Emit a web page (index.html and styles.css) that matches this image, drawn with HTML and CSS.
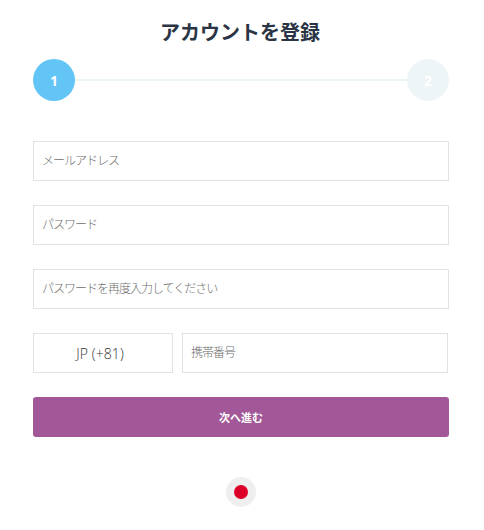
FILE: index.html
```html
<!DOCTYPE html>
<html lang="ja">
<head>
<meta charset="utf-8">
<title>アカウントを登録</title>
<link rel="stylesheet" href="styles.css">
</head>
<body>
<main class="page">
  <h1 class="title">アカウントを登録</h1>
  <div class="steps">
    <span class="step step-active">1</span>
    <span class="step-line"></span>
    <span class="step step-idle">2</span>
  </div>
  <form class="form">
    <input class="field" type="text" placeholder="メールアドレス">
    <input class="field" type="password" placeholder="パスワード">
    <input class="field" type="password" placeholder="パスワードを再度入力してください">
    <div class="phone-row">
      <div class="country">JP (+81)</div>
      <input class="field phone" type="tel" placeholder="携帯番号">
    </div>
    <button class="next" type="button">次へ進む</button>
  </form>
  <div class="lang"><span class="flag"></span></div>
</main>
</body>
</html>
```

FILE: styles.css
```css
* { box-sizing: border-box; }
html, body { margin: 0; padding: 0; background: #fff; }
body { font-family: "Open Sans", "Noto Sans CJK JP", sans-serif; overflow: hidden; }
.page { width: 484px; height: 530px; padding: 18px 35px 0 33px; }
.title {
  margin: 0 2px 0 0;
  height: 28px;
  line-height: 28px;
  font-size: 20px;
  font-weight: 700;
  color: #2a3444;
  text-align: center;
  font-family: "Noto Sans CJK JP", sans-serif;
}
.steps { display: flex; align-items: center; margin-top: 13px; }
.step {
  width: 42px; height: 42px; border-radius: 50%;
  flex: none;
  display: flex; align-items: center; justify-content: center;
  color: #fff; font-size: 14px; font-weight: 700;
}
.step-active { background: #63c5f5; }
.step-idle { background: #eef5f6; }
.step-line { flex: 1; height: 2px; background: #eef5f6; }
.form { display: flex; flex-direction: column; gap: 24px; margin-top: 40px; }
.field {
  display: block;
  width: 100%;
  height: 40px;
  padding: 0 8px 3px;
  border: 1px solid #e2e2e2;
  border-radius: 0;
  background: #fff;
  outline: none;
  font-family: "Noto Sans CJK JP", sans-serif;
  font-size: 12px;
  letter-spacing: -1px;
  font-weight: 300;
  color: #555;
}
.field::placeholder { color: #6e6e6e; opacity: 1; }
.phone-row { display: flex; gap: 9px; margin-right: 1px; }
.country {
  flex: none;
  width: 140px; height: 40px;
  padding-right: 6px;
  border: 1px solid #e2e2e2;
  display: flex; align-items: center; justify-content: center;
  font-size: 14px; font-weight: 300; color: #333;
  letter-spacing: 0.1px;
}
.phone { flex: 1; width: auto; }
.next {
  display: block;
  width: 100%;
  height: 40px;
  border: 0;
  border-radius: 3px;
  background: #a25898;
  color: #fff;
  font-family: "Noto Sans CJK JP", sans-serif;
  font-size: 11px;
  font-weight: 700;
  cursor: pointer;
}
.lang {
  width: 30px; height: 30px; border-radius: 50%;
  background: #efefef;
  margin: 40px auto 0;
  display: flex; align-items: center; justify-content: center;
}
.flag { width: 14px; height: 14px; border-radius: 50%; background: #dc0029; }
```
